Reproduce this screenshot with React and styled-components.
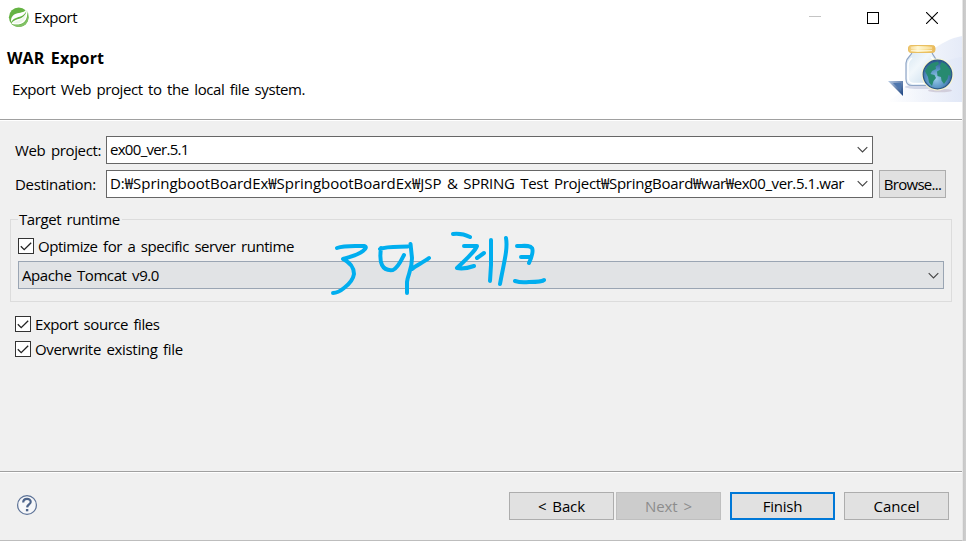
import React from "react";
import styled, { createGlobalStyle } from "styled-components";

const GlobalStyle = createGlobalStyle`
  * { box-sizing: border-box; }
  body { margin: 0; background: #f0f0f0; overflow: hidden; }
`;

const Desktop = styled.div`
  display: flex;
  width: 966px;
  height: 541px;
  background: linear-gradient(90deg, #e4e4e4 963px, #c6c6c6 963px, #cfcfcf 966px);
  font: 15px/20px "Open Sans", "Noto Sans CJK KR", sans-serif;
  color: #000;
`;

const Dialog = styled.div`
  position: relative;
  display: flex;
  flex-direction: column;
  width: 963px;
  height: 541px;
  background: #f0f0f0;
  border-right: 1px solid #e6e6e6;
  border-bottom: 1px solid #bdbdbd;
`;

const Text = styled.span`
  white-space: pre;
  letter-spacing: ${(p) => p.$ls || 0}px;
  word-spacing: 2px;
`;

const TitleBar = styled.header`
  display: flex;
  align-items: center;
  height: 35px;
  padding: 0 1px 0 8px;
  background: #fff;
`;

const TitleText = styled(Text)`
  flex: 1;
  padding: 0 0 1px 5px;
`;

const WindowButton = styled.button`
  display: flex;
  align-items: center;
  justify-content: center;
  width: 59px;
  height: 34px;
  padding: 0;
  border: 0;
  background: none;
`;

const MinimizeButton = styled(WindowButton)`
  padding-left: 2px;
`;

const Banner = styled.section`
  display: flex;
  justify-content: space-between;
  height: 86px;
  padding-top: 1px;
  background: #fff;
  border-bottom: 1px solid #fff;
  box-shadow: inset 0 -1px #a0a0a0;
`;

const BannerCopy = styled.div`
  display: flex;
  flex-direction: column;
  padding: 12px 0 0 7px;
`;

const Heading = styled.h1`
  margin: 0 0 11px;
  font-size: 16px;
  line-height: 20px;
  font-weight: 700;
  letter-spacing: 0.15px;
  word-spacing: 2px;
`;

const Description = styled(Text)`
  padding-left: 5px;
`;

const Body = styled.main`
  display: flex;
  flex-direction: column;
  height: 350px;
  padding: 15px 10px 0;
`;

const FieldRow = styled.div`
  display: grid;
  grid-template-columns: 91px 767px 73px;
  height: 28px;
  margin: 0 0 6px 5px;
`;

const FieldLabel = styled(Text)`
  padding-top: 4px;
`;

const Combo = styled.div`
  display: flex;
  align-items: center;
  justify-content: space-between;
  height: 28px;
  padding: 0 3px 2px 3px;
  background: #fff;
  border: 1px solid #666;
`;

const RuntimeCombo = styled(Combo)`
  margin-top: 3px;
  padding-bottom: 0;
  background: #e1e3e5;
  border-color: #9aa5b3;
`;

const Button = styled.button`
  display: flex;
  align-items: center;
  justify-content: center;
  width: ${(p) => p.$w || 105}px;
  height: 28px;
  padding: 0 0 1px;
  font: inherit;
  color: ${(p) => (p.$disabled ? "#8c8c8c" : "#000")};
  background: ${(p) => (p.$disabled ? "#cccccc" : "#e1e1e1")};
  border: ${(p) => (p.$primary ? "2px solid #0078d7" : `1px solid ${p.$disabled ? "#bfbfbf" : "#adadad"}`)};
`;

const BrowseButton = styled(Button)`
  margin-left: 6px;
`;

const Group = styled.fieldset`
  display: flex;
  flex-direction: column;
  width: 942px;
  height: 93px;
  min-width: 0;
  margin: 5px 0 9px;
  padding: 4px 7px 0;
  border: 1px solid #dcdcdc;
`;

const Legend = styled.legend`
  height: 20px;
  padding: 0 2px 0 1px;
`;

const CheckRow = styled.label`
  display: flex;
  align-items: center;
  gap: 4px;
  height: 25px;
  padding-left: ${(p) => p.$indent || 0}px;
`;

const CheckBox = styled.span`
  display: flex;
  width: 16px;
  height: 16px;
  background: #fff;
  border: 1px solid #333;
`;

const Footer = styled.footer`
  display: flex;
  align-items: flex-start;
  height: 69px;
  padding: 20px 13px 0 16px;
  border-top: 1px solid #a0a0a0;
  box-shadow: inset 0 1px #fff;
`;

const HelpButton = styled.button`
  width: 22px;
  height: 22px;
  margin: 2px auto 0 0;
  padding: 0;
  border: 0;
  background: none;
`;

const ButtonPair = styled.div`
  display: flex;
  gap: 2px;
  margin-right: 9px;
`;

const ActionPair = styled.div`
  display: flex;
  gap: 9px;
`;

const Ink = styled.svg`
  position: absolute;
  left: 320px;
  top: 225px;
  pointer-events: none;
`;

const SpringIcon = () => (
  <svg width="21" height="21" viewBox="0 0 21 21">
    <circle cx="10.7" cy="10.3" r="9.800" fill="#65b343" />
    <path d="M18.300 2.500C15.800 6 12 5.200 8 6.800C4.300 8.300 2.600 11 3.200 15.200C5 11.500 8.500 10.800 11.800 9.800C15.500 8.700 17.400 6.600 18.700 3Z" fill="#fff" />
    <path d="M18.700 3C18 7.800 15.500 10.200 12 11.500C8.400 12.800 5.300 13.200 3.400 16.200L4.600 17.200C8 17.700 13 18 16.200 15C19.400 12 19.700 7 18.700 3Z" fill="#fff" />
    <path d="M17.600 7.200C16 10.300 13.400 12 10.500 13.200C8 14.200 6.200 14.600 5.200 15.900C9 16.600 12.800 16.200 15.100 13.900C17 12 17.800 9.600 17.600 7.200Z" fill="#eff7eb" />
    <path d="M19.300 3.500C20.300 7.500 20 12 16.800 15.200C13.500 18.300 9 18.200 4.800 17.700C9 21 15 20.800 18.400 16.500C21.400 12.500 21 7.500 19.300 3.500Z" fill="#82c166" />
  </svg>
);

const Chevron = () => (
  <svg width="13" height="9" viewBox="0 0 13 9">
    <path d="M1.700 2.200L6.500 7L11.300 2.200" fill="none" stroke="#444" strokeWidth="1.100" />
  </svg>
);

const Check = () => (
  <svg width="14" height="14" viewBox="0 0 14 14">
    <path d="M1.800 7.300L5.200 10.700L12.200 3.700" fill="none" stroke="#222" strokeWidth="1.300" />
  </svg>
);

const BannerArt = () => (
  <svg width="76" height="66" viewBox="886 36 76 66">
    <defs>
      <linearGradient id="sweep" x1="0" x2="1">
        <stop offset="0" stopColor="#fff" />
        <stop offset="1" stopColor="#dfe6f6" />
      </linearGradient>
      <linearGradient id="lid" x1="0" x2="1">
        <stop offset="0" stopColor="#eec366" />
        <stop offset=".35" stopColor="#fff6cd" />
        <stop offset=".7" stopColor="#f7dc8e" />
        <stop offset="1" stopColor="#e8b452" />
      </linearGradient>
      <linearGradient id="glass" x1="0" x2="1" y2="1">
        <stop offset="0" stopColor="#d6e6f2" />
        <stop offset=".4" stopColor="#f1f7fb" />
        <stop offset="1" stopColor="#bfd6ea" />
      </linearGradient>
      <radialGradient id="sea" cx=".45" cy=".65" r=".6">
        <stop offset="0" stopColor="#9bcbea" />
        <stop offset=".55" stopColor="#5793c3" />
        <stop offset="1" stopColor="#2d5c93" />
      </radialGradient>
      <linearGradient id="fold" x1="0" x2="1" y2="1">
        <stop offset="0" stopColor="#b9cbe4" />
        <stop offset="1" stopColor="#173f7d" />
      </linearGradient>
    </defs>
    <path d="M886 102C910 92 913 65 930 52C941 43 951 38 962 36V102Z" fill="url(#sweep)" opacity=".8" />
    <path d="M886 102C920 100 920 62 962 57V102Z" fill="url(#sweep)" opacity=".65" />
    <path d="M888 81H903V96Z" fill="url(#fold)" />
    <path d="M893 83H901V91Z" fill="#4f77ae" />
    <ellipse cx="921" cy="87" rx="16" ry="2" fill="#c7cce0" opacity=".7" />
    <ellipse cx="940" cy="90.500" rx="12" ry="1.800" fill="#c7c0cf" opacity=".7" />
    <path d="M912 52H932C932 56 937 57 937 63V80Q937 85.500 931 85.500H912Q906 85.500 906 79V63C906 57 912 56 912 52Z" fill="url(#glass)" stroke="#8fa5c6" strokeWidth="1.200" />
    <path d="M912 58Q908 61 908 66V78Q908.500 83 913 83.500H928M931 57Q934 59 934.500 63" fill="none" stroke="#fff" strokeWidth="1.500" />
    <rect x="908.500" y="45.500" width="26.500" height="7" rx="2.500" fill="url(#lid)" stroke="#e9bf62" />
    <path d="M911 48H932M911 50.500H932" stroke="#fff8dc" strokeWidth=".8" />
    <circle cx="937.500" cy="74.500" r="16" fill="#fbf6cd" />
    <circle cx="937.500" cy="74.500" r="14.300" fill="url(#sea)" stroke="#2a5685" strokeWidth="1.200" />
    <path d="M925 71L928 66L932 63L938 61.500L939 64L935.500 66.500L936 69L932 71L930.500 74L934.500 75L936 78L933.500 81L932 86L929 82.500L928 77Z" fill="#278a70" />
    <path d="M940 66L941.500 62L946 64L950.500 70L951 76L948.500 75L947.500 79L944 84L941.500 80.500L941 77L937.500 76L937 71.500L940.500 69.500Z" fill="#278a70" />
  </svg>
);

const HelpIcon = () => (
  <svg width="22" height="22" viewBox="0 0 22 22">
    <circle cx="11" cy="11" r="9.400" fill="#f6f7f9" stroke="#5b7196" strokeWidth="1.200" />
    <path d="M7.200 8.500C7.200 3.700 14.900 3.900 14.700 8C14.600 10.300 11.300 10.600 11.100 13.400" fill="none" stroke="#4d648a" strokeWidth="2.200" />
    <rect x="9.900" y="15" width="2.400" height="2.300" fill="#4d648a" />
  </svg>
);

const Checked = ({ label, ls, indent }) => (
  <CheckRow $indent={indent}>
    <CheckBox><Check /></CheckBox>
    <Text $ls={ls}>{label}</Text>
  </CheckRow>
);

export default function App() {
  return (
    <Desktop>
      <GlobalStyle />
      <Dialog>
        <TitleBar>
          <SpringIcon />
          <TitleText $ls={-0.45}>Export</TitleText>
          <MinimizeButton aria-label="Minimize">
            <svg width="12" height="12"><path d="M0 4.500H12" stroke="#c4c4c4" /></svg>
          </MinimizeButton>
          <WindowButton aria-label="Maximize">
            <svg width="12" height="12"><rect x=".5" y=".5" width="11" height="11" fill="none" stroke="#000" /></svg>
          </WindowButton>
          <WindowButton aria-label="Close">
            <svg width="12" height="12"><path d="M0 0L12 12M12 0L0 12" stroke="#000" strokeWidth="1.100" /></svg>
          </WindowButton>
        </TitleBar>
        <Banner>
          <BannerCopy>
            <Heading>WAR Export</Heading>
            <Description $ls={-0.42}>Export Web project to the local file system.</Description>
          </BannerCopy>
          <BannerArt />
        </Banner>
        <Body>
          <FieldRow>
            <FieldLabel $ls={-0.36}>Web project:</FieldLabel>
            <Combo><Text $ls={-0.7}>ex00_ver.5.1</Text><Chevron /></Combo>
          </FieldRow>
          <FieldRow>
            <FieldLabel $ls={-0.3}>Destination:</FieldLabel>
            <Combo>
              <Text>
                <Text $ls={-0.03}>D:₩SpringbootBoardEx₩SpringbootBoardEx₩JSP</Text>
                <Text $ls={-0.27}> &amp; SPRING Test Project₩SpringBoard</Text>
                <Text $ls={-0.42}>₩war₩ex00_ver.5.1.war</Text>
              </Text>
              <Chevron />
            </Combo>
            <BrowseButton $w={67}><Text $ls={-0.7}>Browse...</Text></BrowseButton>
          </FieldRow>
          <Group>
            <Legend><Text $ls={-0.42}>Target runtime</Text></Legend>
            <Checked label="Optimize for a specific server runtime" ls={-0.44} />
            <RuntimeCombo><Text $ls={-0.4}>Apache Tomcat v9.0</Text><Chevron /></RuntimeCombo>
          </Group>
          <Checked label="Export source files" ls={-0.45} indent={5} />
          <Checked label="Overwrite existing file" ls={-0.34} indent={5} />
        </Body>
        <Footer>
          <HelpButton aria-label="Help"><HelpIcon /></HelpButton>
          <ButtonPair>
            <Button><Text $ls={-0.1}>&lt; Back</Text></Button>
            <Button $disabled><Text $ls={-0.1}>Next &gt;</Text></Button>
          </ButtonPair>
          <ActionPair>
            <Button $primary><Text $ls={-0.2}>Finish</Text></Button>
            <Button><Text $ls={-0.1}>Cancel</Text></Button>
          </ActionPair>
        </Footer>
        <Ink width="240" height="75" viewBox="320 225 240 75" fill="none" stroke="#00aeef" strokeWidth="4" strokeLinecap="round" strokeLinejoin="round">
          <path d="M337 248C345 245 356 246 364 246Q368 247 363 251C358 255 350 257 343 259C349 262 354 267 354 274C353 281 348 285 344 288Q338 293 333 293" />
          <path d="M381 248C380 255 380 261 382 265Q385 271 393 270C398 268 402 259 404 255M380 249C387 246 399 247 408 246.500" />
          <path d="M410.500 244L412 258C412 270 408 274 407 282V293M412 269C415 266 424 262 429 258" />
          <path d="M453 234Q462 233 470 237M464 246H477C475 252 465 260 457 268C462 269 468 268 474 266M477 258L484 253M491 240V265L490 281M506 238C508 249 504 262 500 284" />
          <path d="M517 246C524 246 530 245 532 248Q534 252 529 263M521 257H531M515 281Q521 283 529 282C535 282 542 282 544 280" />
        </Ink>
      </Dialog>
    </Desktop>
  );
}
